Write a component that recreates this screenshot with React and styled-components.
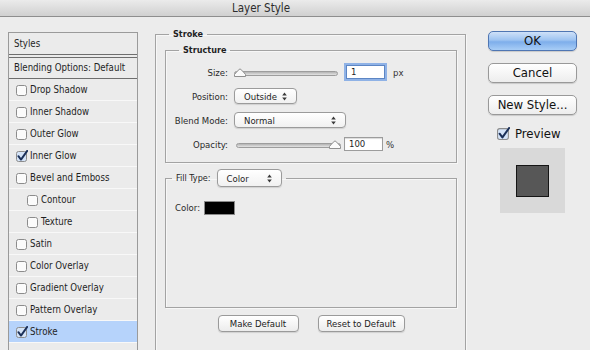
import styled, { createGlobalStyle } from 'styled-components';

const font = `"DejaVu Sans Condensed", "Liberation Sans", sans-serif`;

const GlobalStyle = createGlobalStyle`
  body {
    margin: 0;
    background: #ececec;
    font-family: ${font};
    color: #1f1f1f;
  }
`;

const Window = styled.div`
  width: 590px;
  height: 350px;
  overflow: hidden;
  background: #ececec;
`;

const TitleBar = styled.div`
  height: 16px;
  line-height: 16px;
  border-bottom: 1px solid #8e8e8e;
  background: linear-gradient(#ebebeb, #d0d0d0);
  text-align: center;
  padding-right: 68px;
  font-size: 11.5px;
  color: #2c2c2c;
`;

const Body = styled.div`
  display: flex;
  align-items: flex-start;
`;

/* ---------- left styles list ---------- */
const StylesPanel = styled.div`
  margin: 15px 0 0 8px;
  width: 128px;
  border: 1px solid #9a9a9a;
  border-bottom: none;
  background: #ebebeb;
  height: 340px;
`;

const PanelHead = styled.div`
  height: 21px;
  line-height: 21px;
  padding-left: 5px;
  font-size: 9.6px;
  border-bottom: 1px solid #6e6e6e;
  margin-bottom: 2px;
`;

const BlendRow = styled(PanelHead)`
  border-top: 1px solid #6e6e6e;
  height: 20px;
  line-height: 20px;
  margin-bottom: 0;
`;

const StyleRow = styled.div`
  display: flex;
  align-items: center;
  gap: 2px;
  height: 21px;
  padding-left: ${p => (p.$indent ? 18 : 7)}px;
  border-bottom: 1px solid #f8f8f8;
  background: ${p => (p.$selected ? '#b6d3fb' : 'transparent')};
  font-size: 9.6px;
`;

const CheckSvg = styled.svg`
  flex: none;
  display: block;
`;

function Check({ checked, size = 12 }) {
  return (
    <CheckSvg width={size} height={size} viewBox="0 0 12 12">
      <rect x="0.5" y="1.5" width="10" height="10" rx="2" fill={checked ? '#d4e3f7' : '#fbfbfb'} stroke="#8c8c8c" />
      {checked && (
        <path d="M2.4 6.2 L5 9.6 L11.2 0.9" fill="none" stroke="#1a2f58" strokeWidth="1.9" strokeLinecap="round" strokeLinejoin="round" />
      )}
    </CheckSvg>
  );
}

const styleItems = [
  { label: 'Drop Shadow' },
  { label: 'Inner Shadow' },
  { label: 'Outer Glow' },
  { label: 'Inner Glow', checked: true },
  { label: 'Bevel and Emboss' },
  { label: 'Contour', indent: true },
  { label: 'Texture', indent: true },
  { label: 'Satin' },
  { label: 'Color Overlay' },
  { label: 'Gradient Overlay' },
  { label: 'Pattern Overlay' },
  { label: 'Stroke', checked: true, selected: true },
];

/* ---------- middle settings ---------- */
const Group = styled.fieldset`
  margin: ${p => p.$top || 0}px 0 0;
  border: 1px solid #a3a3a3;
  box-shadow: inset 1px 1px 0 #f7f7f7, 1px 1px 0 #f7f7f7;
  padding: 0;
  min-width: 0;
`;

const StrokeGroup = styled(Group)`
  margin: 12px 0 0 17px;
  width: 311px;
  box-sizing: border-box;
  height: 340px;
  padding: 5px 8px 0 9px;
`;

const Legend = styled.legend`
  padding: 0 4px;
  margin-left: ${p => p.$offset || 0}px;
  font-size: 9px;
  font-weight: ${p => (p.$bold ? 700 : 400)};
  line-height: 11px;
  display: flex;
  align-items: center;
  gap: 6px;
`;

const RowsGrid = styled.div`
  display: grid;
  grid-template-columns: 62px auto;
  column-gap: 6px;
  row-gap: 8px;
  padding: 8px 0 10px;
  align-items: center;
`;

const Label = styled.span`
  font-size: 9.5px;
  text-align: right;
  color: #2a2a2a;
`;

const Controls = styled.div`
  display: flex;
  align-items: center;
  height: 16px;
  gap: ${p => p.$gap || 7}px;
`;

const SliderBox = styled.div`
  position: relative;
  width: ${p => p.$w}px;
  margin-left: ${p => p.$shift || 0}px;
  height: 16px;
  display: flex;
  align-items: center;
`;

const Track = styled.div`
  width: 100%;
  height: 3px;
  border: 1px solid #9d9d9d;
  border-radius: 3px;
  background: linear-gradient(#b3b3b3, #e4e4e4);
  margin-top: 3px;
`;

const ThumbSvg = styled.svg`
  position: absolute;
  top: 4px;
`;

function Slider({ width, value, shift }) {
  return (
    <SliderBox $w={width} $shift={shift}>
      <Track />
      <ThumbSvg width="12" height="9" viewBox="0 0 12 9" style={{ left: `${value * (width - 12)}px` }}>
        <path d="M0.5 8.5 L0.5 6.5 Q3 3 6 0.8 Q9 3 11.5 6.5 L11.5 8.5 Z" fill="#fafafa" stroke="#8f8f8f" />
      </ThumbSvg>
    </SliderBox>
  );
}

const NumberField = styled.div`
  width: 39px;
  height: 14px;
  box-sizing: border-box;
  border: 1px solid ${p => (p.$focused ? '#5d86c4' : '#9c9c9c')};
  box-shadow: ${p => (p.$focused ? '0 0 0 2px #8fb2e6' : 'inset 0 1px 1px rgba(0,0,0,0.15)')};
  background: #fff;
  font-size: 9.5px;
  line-height: 12px;
  padding-left: 4px;
`;

const Unit = styled.span`
  font-size: 9.5px;
  color: #333;
`;

const SelectBox = styled.div`
  width: ${p => p.$w}px;
  height: ${p => p.$h || 16}px;
  box-sizing: border-box;
  border: 1px solid #9b9b9b;
  border-radius: 4px;
  background: linear-gradient(#ffffff, #f1f1f1);
  box-shadow: 0 1px 1px rgba(0, 0, 0, 0.12);
  display: flex;
  align-items: center;
  justify-content: space-between;
  padding: 0 9px 0 9px;
  font-size: 9.5px;
  font-weight: normal;
  color: #1f1f1f;
`;

function Select({ width, height, children }) {
  return (
    <SelectBox $w={width} $h={height}>
      <span>{children}</span>
      <svg width="5" height="9" viewBox="0 0 5 9">
        <path d="M2.5 0.5 L4.8 3.4 H0.2 Z M2.5 8.5 L4.8 5.6 H0.2 Z" fill="#3a3a3a" />
      </svg>
    </SelectBox>
  );
}

const FillBody = styled.div`
  height: 120px;
  padding: 14px 0 0 9px;
  box-sizing: border-box;
  display: flex;
  align-items: flex-start;
  gap: 4px;
`;

const ColorLabel = styled(Label)`
  line-height: 14px;
`;

const Swatch = styled.div`
  width: 31px;
  height: 14px;
  box-sizing: border-box;
  background: #000;
  border: 1px solid #8a8a8a;
`;

const ButtonRow = styled.div`
  display: flex;
  justify-content: center;
  gap: 19px;
  margin-top: 7px;
`;

const SmallButton = styled.div`
  width: ${p => p.$w}px;
  height: 17px;
  box-sizing: border-box;
  border: 1px solid #9a9a9a;
  border-radius: 4px;
  background: linear-gradient(#ffffff, #ececec);
  box-shadow: 0 1px 1px rgba(0, 0, 0, 0.12);
  font-size: 9.5px;
  line-height: 15px;
  text-align: center;
  color: #222;
`;

/* ---------- right column ---------- */
const RightColumn = styled.div`
  margin: 14px 0 0 22px;
  width: 89px;
  display: flex;
  flex-direction: column;
  gap: 12px;
`;

const DialogButton = styled.div`
  height: 20px;
  box-sizing: border-box;
  border: 1px solid ${p => (p.$default ? '#4f76b3' : '#999')};
  border-radius: 5px;
  background: ${p =>
    p.$default
      ? 'linear-gradient(#cfe1f8 0%, #9dc3f1 45%, #7eaeeb 55%, #a8cdf6 100%)'
      : 'linear-gradient(#ffffff, #ededed)'};
  box-shadow: 0 1px 1px rgba(0, 0, 0, 0.15);
  font-size: 13px;
  line-height: 18px;
  text-align: center;
  color: #111;
`;

const PreviewToggle = styled.div`
  display: flex;
  align-items: center;
  gap: 5px;
  padding-left: 9px;
  margin-top: -1px;
  font-size: 13px;
  color: #111;
`;

const PreviewBox = styled.div`
  margin: -5px 0 0 12px;
  width: 65px;
  height: 65px;
  background: #d9d9d9;
  display: flex;
  align-items: center;
  justify-content: center;
`;

const PreviewSquare = styled.div`
  width: 33px;
  height: 32px;
  box-sizing: border-box;
  background: #575757;
  border: 1px solid #151515;
`;

export default function App() {
  return (
    <Window>
      <GlobalStyle />
      <TitleBar>Layer Style</TitleBar>
      <Body>
        <StylesPanel>
          <PanelHead>Styles</PanelHead>
          <BlendRow>Blending Options: Default</BlendRow>
          {styleItems.map(item => (
            <StyleRow key={item.label} $indent={item.indent} $selected={item.selected}>
              <Check checked={item.checked} />
              <span>{item.label}</span>
            </StyleRow>
          ))}
        </StylesPanel>

        <StrokeGroup>
          <Legend $bold $offset={4}>Stroke</Legend>
          <Group>
            <Legend $bold $offset={13}>Structure</Legend>
            <RowsGrid>
              <Label>Size:</Label>
              <Controls $gap={8}>
                <Slider width={104} value={0} />
                <NumberField $focused>1</NumberField>
                <Unit>px</Unit>
              </Controls>
              <Label>Position:</Label>
              <Controls>
                <Select width={63}>Outside</Select>
              </Controls>
              <Label>Blend Mode:</Label>
              <Controls>
                <Select width={112}>Normal</Select>
              </Controls>
              <Label>Opacity:</Label>
              <Controls $gap={3}>
                <Slider width={105} value={1} shift={2} />
                <NumberField>100</NumberField>
                <Unit>%</Unit>
              </Controls>
            </RowsGrid>
          </Group>

          <Group $top={6}>
            <Legend $offset={6}>
              <span>Fill Type:</span>
              <Select width={65} height={18}>Color</Select>
            </Legend>
            <FillBody>
              <ColorLabel>Color:</ColorLabel>
              <Swatch />
            </FillBody>
          </Group>

          <ButtonRow>
            <SmallButton $w={81}>Make Default</SmallButton>
            <SmallButton $w={87}>Reset to Default</SmallButton>
          </ButtonRow>
        </StrokeGroup>

        <RightColumn>
          <DialogButton $default>OK</DialogButton>
          <DialogButton>Cancel</DialogButton>
          <DialogButton>New Style...</DialogButton>
          <PreviewToggle>
            <Check checked size={13} />
            <span>Preview</span>
          </PreviewToggle>
          <PreviewBox>
            <PreviewSquare />
          </PreviewBox>
        </RightColumn>
      </Body>
    </Window>
  );
}
